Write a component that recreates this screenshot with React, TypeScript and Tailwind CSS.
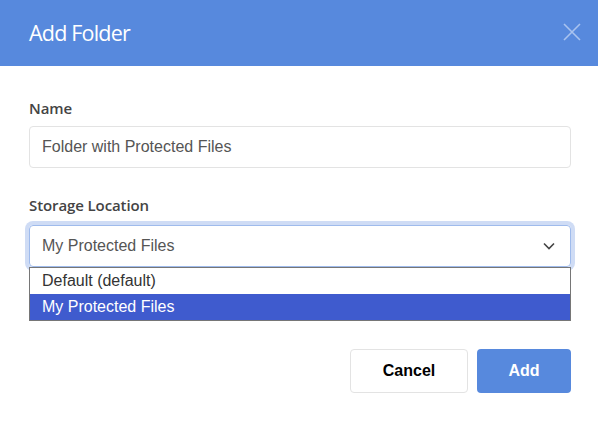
import React from "react";

export default function App() {
  return (
    <div className="w-[598px] h-[421px] bg-white overflow-hidden">
      <div className="h-[66px] bg-[#5789dd] flex items-center justify-between pl-[29px] pr-[16px]">
        <h1 className="text-white text-[21.5px] font-['Open_Sans',sans-serif] tracking-[-0.8px] leading-none pb-[1px]">Add Folder</h1>
        <svg width="20" height="20" viewBox="0 0 20 20" className="mt-[-2px]">
          <path d="M2 2 L18 18 M18 2 L2 18" stroke="#a9c3ef" strokeWidth="1.6" />
        </svg>
      </div>
      <div className="pl-[29px] pr-[27px] pt-[32px] font-['Liberation_Sans',Arial,sans-serif]">
        <label className="block text-[15px] font-semibold text-[#444] font-['Open_Sans',sans-serif] leading-[20px] tracking-[-0.1px]">Name</label>
        <div className="mt-[8px] h-[42px] border border-[#e3e3e3] rounded-[4px] flex items-center px-[12px] text-[16px] text-[#555]">
          Folder with Protected Files
        </div>
        <label className="block mt-[27px] text-[15px] font-semibold text-[#444] font-['Open_Sans',sans-serif] leading-[20px] tracking-[-0.1px]">Storage Location</label>
        <div className="mt-[10px] relative">
          <div className="h-[42px] border border-[#9fbbec] rounded-[4px] ring-4 ring-[#cfdcf5] flex items-center justify-between px-[12px] text-[16px] text-[#555]">
            <span>My Protected Files</span>
            <svg width="12" height="8" viewBox="0 0 12 8" className="mr-[3px]">
              <path d="M1 1.5 L6 6.5 L11 1.5" stroke="#444" strokeWidth="1.6" fill="none" />
            </svg>
          </div>
          <div className="absolute left-0 right-0 top-[42px] border border-[#767676] bg-white text-[16px]">
            <div className="h-[26px] flex items-center px-[12px] text-[#333]">Default (default)</div>
            <div className="h-[26px] flex items-center px-[12px] bg-[#3f5bce] text-white">My Protected Files</div>
          </div>
        </div>
        <div className="mt-[82px] flex justify-end gap-[9px]">
          <button className="w-[118px] h-[44px] border border-[#e3e3e3] rounded-[4px] bg-white text-[16px] font-bold text-black">Cancel</button>
          <button className="w-[94px] h-[44px] rounded-[4px] bg-[#5789dd] text-[16px] font-bold text-white">Add</button>
        </div>
      </div>
    </div>
  );
}
